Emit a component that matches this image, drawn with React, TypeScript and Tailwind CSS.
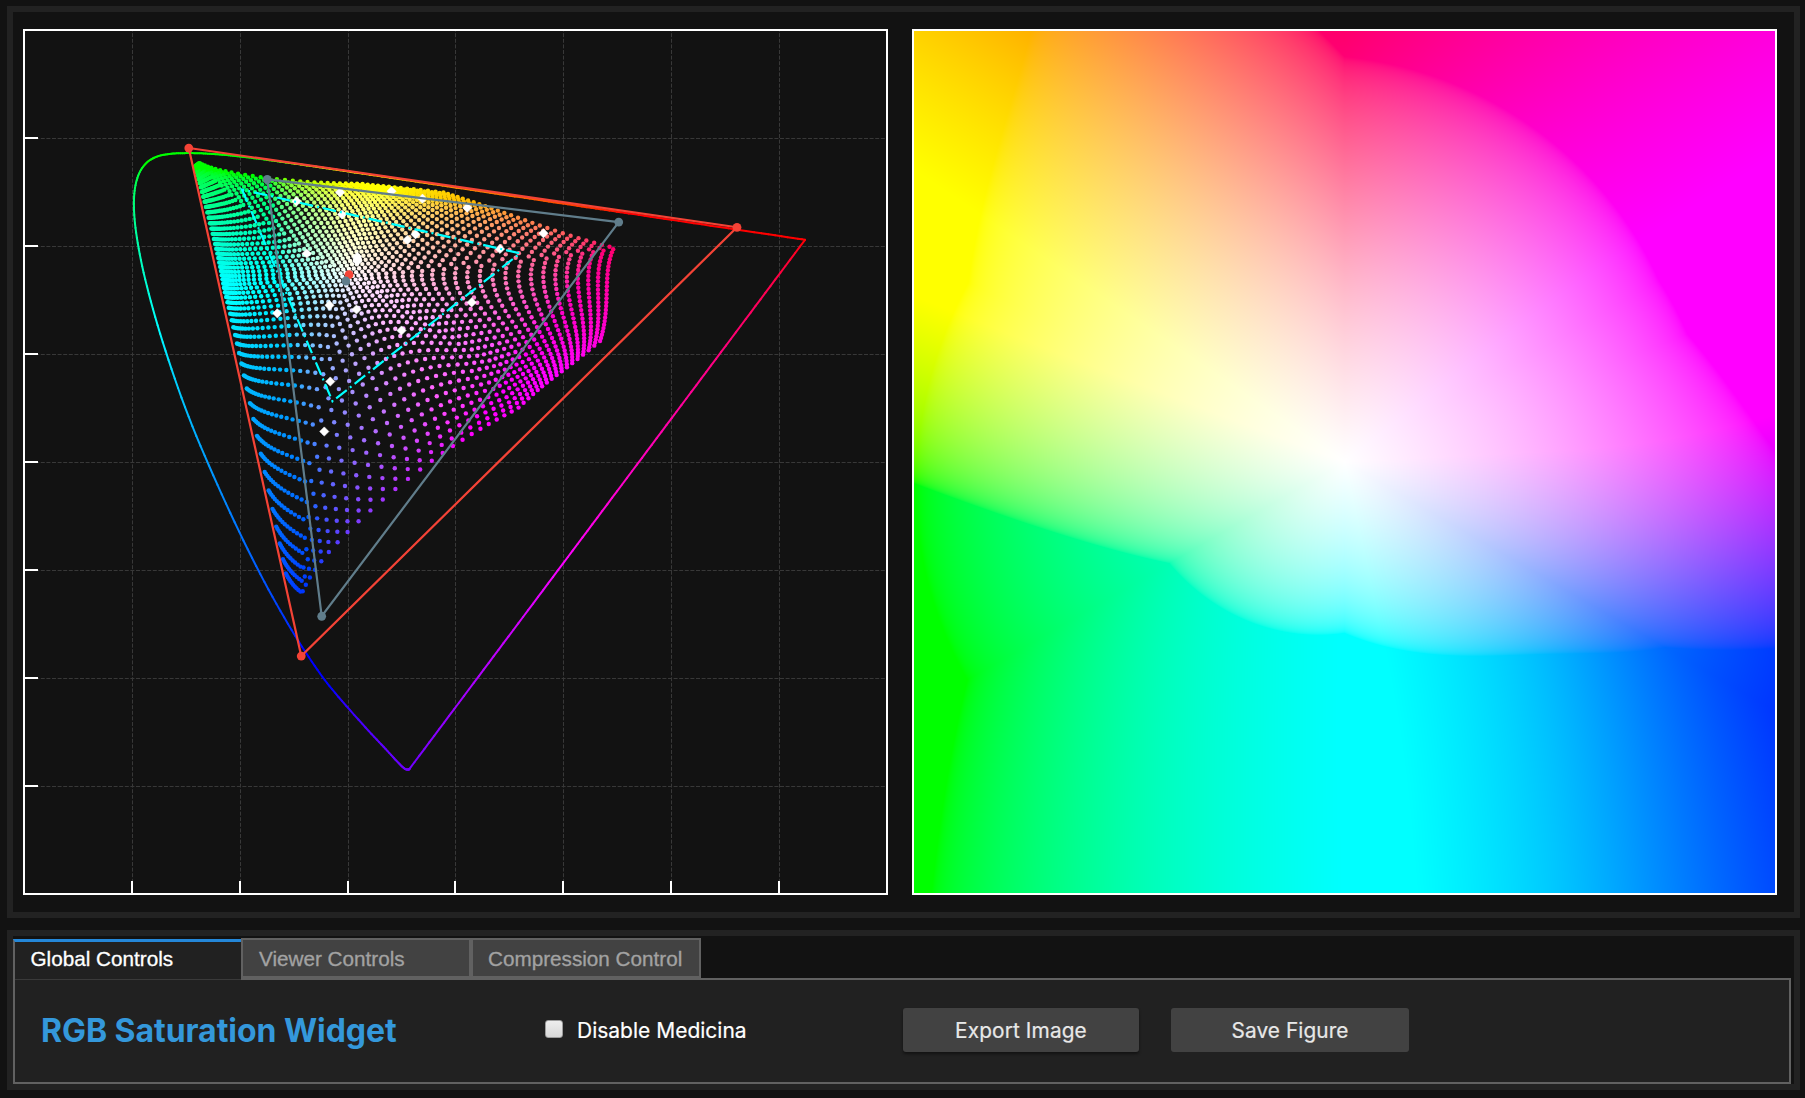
import { useLayoutEffect, useRef } from 'react';

type Vec3 = [number, number, number];
type Point = [number, number];

/* ---------- colour science ---------- */

const WHEEL_SAMPLES = 1024;
const SCATTER_STEP = 20;
const THRESHOLD = 0.5;

function compress(distance: number): number {
  if (distance <= THRESHOLD) return distance;
  const b = 1 - THRESHOLD;
  return THRESHOLD + b * Math.tanh((distance - THRESHOLD) / b);
}

/** HSV wheel with red at the top; x and y are in [-1, 1], y pointing up. */
function wheel(x: number, y: number): Vec3 {
  const s = Math.hypot(x, y);
  let h = (Math.atan2(y, x) * 3) / Math.PI - 1.5;
  h = ((h % 6) + 6) % 6;
  const i = Math.floor(h);
  const f = h - i;
  const j = 1 - s;
  const k = 1 - s * f;
  const l = 1 - s * (1 - f);
  if (i === 0) return [1, l, j];
  if (i === 1) return [k, 1, j];
  if (i === 2) return [j, 1, l];
  if (i === 3) return [j, k, 1];
  if (i === 4) return [l, j, 1];
  return [1, j, k];
}

/** ACES2065-1 wheel colour moved to ACEScg and compressed. */
function compressedWheel(x: number, y: number): Vec3 {
  const [r, g, b] = wheel(x, y);
  const R = 1.4514393 * r - 0.2365107 * g - 0.2149286 * b;
  const G = -0.0765538 * r + 1.1762297 * g - 0.0996759 * b;
  const B = 0.0083161 * r - 0.0060324 * g + 0.9977163 * b;
  const L = Math.max(R, G, B);
  return [
    L * (1 - compress((L - R) / L)),
    L * (1 - compress((L - G) / L)),
    L * (1 - compress((L - B) / L)),
  ];
}

function encode(v: number): number {
  if (v <= 0) return 0;
  if (v >= 1) return 255;
  return 255 * (v <= 0.0031308 ? 12.92 * v : 1.055 * Math.pow(v, 1 / 2.4) - 0.055);
}

function toDisplay([r, g, b]: Vec3): Vec3 {
  return [
    encode(1.70505 * r - 0.62179 * g - 0.08326 * b),
    encode(-0.13026 * r + 1.1408 * g - 0.01055 * b),
    encode(-0.024 * r - 0.12897 * g + 1.15297 * b),
  ];
}

const css = (c: Vec3) => `rgb(${Math.round(c[0])},${Math.round(c[1])},${Math.round(c[2])})`;

function toUV([r, g, b]: Vec3): Point {
  const X = 0.66245418 * r + 0.13400421 * g + 0.15618769 * b;
  const Y = 0.27222872 * r + 0.67408177 * g + 0.05368952 * b;
  const Z = -0.00557465 * r + 0.00406073 * g + 1.0103391 * b;
  const d = X + 15 * Y + 3 * Z;
  return [(4 * X) / d, (9 * Y) / d];
}

function xyToUV([x, y]: Point): Point {
  const d = -2 * x + 12 * y + 3;
  return [(4 * x) / d, (9 * y) / d];
}

const toPlot = ([u, v]: Point): Point => [132.4 + 1079 * u, 786.8 - 1080 * v];

/* ---------- plot data ---------- */

const scatter = (() => {
  const dots: { x: number; y: number; fill: string }[] = [];
  for (let row = 0; row < WHEEL_SAMPLES; row += SCATTER_STEP) {
    for (let col = 0; col < WHEEL_SAMPLES; col += SCATTER_STEP) {
      const x = -1 + (2 * col) / (WHEEL_SAMPLES - 1);
      const y = 1 - (2 * row) / (WHEEL_SAMPLES - 1);
      const rgb = compressedWheel(x, y);
      const [px, py] = toPlot(toUV(rgb));
      dots.push({ x: px, y: py, fill: css(toDisplay(rgb)) });
    }
  }
  return dots;
})();

const LOCUS_XY: Point[] = [
  [0.1741, 0.005], [0.1733, 0.0048], [0.1714, 0.0051], [0.1689, 0.0069], [0.1644, 0.0109],
  [0.1566, 0.0177], [0.144, 0.0297], [0.1355, 0.0399], [0.1241, 0.0578], [0.1096, 0.0868],
  [0.0913, 0.1327], [0.0687, 0.2007], [0.0454, 0.295], [0.0235, 0.4127], [0.0082, 0.5384],
  [0.0039, 0.6548], [0.0139, 0.7502], [0.0389, 0.812], [0.0743, 0.8338], [0.1142, 0.8262],
  [0.1547, 0.8059], [0.1929, 0.7816], [0.2296, 0.7543], [0.2658, 0.7243], [0.3016, 0.6923],
  [0.3373, 0.6589], [0.3731, 0.6245], [0.4087, 0.5896], [0.4441, 0.5547], [0.4788, 0.5202],
  [0.5125, 0.4866], [0.5448, 0.4544], [0.5752, 0.4242], [0.6029, 0.3965], [0.627, 0.3725],
  [0.6482, 0.3514], [0.6658, 0.334], [0.6915, 0.3083], [0.719, 0.2809], [0.7347, 0.2653],
];

function uvColour([u, v]: Point): string {
  const X = (9 * u) / (4 * v);
  const Z = (12 - 3 * u - 20 * v) / (4 * v);
  const r = 3.2406 * X - 1.5372 - 0.4986 * Z;
  const g = -0.9689 * X + 1.8758 + 0.0415 * Z;
  const b = 0.0557 * X - 0.204 + 1.057 * Z;
  const m = Math.max(r, g, b);
  return css([encode(r / m), encode(g / m), encode(b / m)]);
}

const locus = (() => {
  const uv = LOCUS_XY.map(xyToUV);
  const pts: Point[] = [];
  const at = (i: number) => uv[Math.max(0, Math.min(uv.length - 1, i))];
  for (let i = 0; i < uv.length - 1; i++) {
    const [p0, p1, p2, p3] = [at(i - 1), at(i), at(i + 1), at(i + 2)];
    for (let s = 0; s < 8; s++) {
      const t = s / 8;
      const mix = (k: 0 | 1) =>
        0.5 *
        (2 * p1[k] +
          (p2[k] - p0[k]) * t +
          (2 * p0[k] - 5 * p1[k] + 4 * p2[k] - p3[k]) * t * t +
          (3 * p1[k] - p0[k] - 3 * p2[k] + p3[k]) * t * t * t);
      pts.push([mix(0), mix(1)]);
    }
  }
  const end = uv[uv.length - 1];
  for (let s = 0; s <= 80; s++) {
    const t = s / 80;
    pts.push([end[0] + (uv[0][0] - end[0]) * t, end[1] + (uv[0][1] - end[1]) * t]);
  }
  return pts.slice(1).map((p, i) => ({ a: toPlot(pts[i]), b: toPlot(p), stroke: uvColour(p) }));
})();

const AP1 = ([[0.713, 0.293], [0.165, 0.83], [0.128, 0.044]] as Point[]).map((p) => toPlot(xyToUV(p)));
const AP1_WHITE = toPlot(xyToUV([0.32168, 0.33767]));
const SRGB = ([[0.64, 0.33], [0.3, 0.6], [0.15, 0.06]] as Point[]).map((p) => toPlot(xyToUV(p)));
const SRGB_WHITE = toPlot(xyToUV([0.3127, 0.329]));

const PATCHES: Point[] = [
  [296.5, 201.3], [340, 192.3], [391.5, 191.3], [422.5, 198.7], [342, 214.5], [415.5, 234.3],
  [407.3, 240], [306.7, 253.5], [357.3, 256.8], [357.3, 259], [357.3, 261.2], [329.5, 305.3],
  [356.5, 309.5], [277.3, 313.3], [401.5, 330.5], [330.3, 381.5], [467.3, 207.7], [543.5, 233.3],
  [500, 249], [471.7, 302.4], [324.3, 431.5],
];

const X_TICKS = [132, 240, 348, 455, 563, 671, 779];
const Y_TICKS = [138, 246, 354, 462, 570, 678, 786];

const poly = (pts: Point[]) => pts.map((p) => p.join(',')).join(' ');

/* ---------- views ---------- */

function ChromaticityDiagram() {
  return (
    <svg viewBox="23 29 865 866" className="block h-[866px] w-[865px] shrink-0">
      <g stroke="#383838" strokeWidth="1" strokeDasharray="4 1.6">
        {X_TICKS.map((x) => (
          <line key={x} x1={x + 0.5} x2={x + 0.5} y1="894" y2="30" />
        ))}
        {Y_TICKS.map((y) => (
          <line key={y} x1="24" x2="887" y1={y + 0.5} y2={y + 0.5} />
        ))}
      </g>
      <g>
        {scatter.map((d, i) => (
          <circle key={i} cx={d.x} cy={d.y} r="2.2" fill={d.fill} />
        ))}
      </g>
      <g fill="#ffffff" stroke="#ffffff" strokeWidth="0.6" strokeLinejoin="round">
        {PATCHES.map(([x, y], i) => (
          <path key={i} d={`M${x} ${y - 4.6}L${x + 4.6} ${y}L${x} ${y + 4.6}L${x - 4.6} ${y}Z`} />
        ))}
      </g>
      <g strokeWidth="2" strokeLinecap="round">
        {locus.map((s, i) => (
          <line key={i} x1={s.a[0]} y1={s.a[1]} x2={s.b[0]} y2={s.b[1]} stroke={s.stroke} />
        ))}
      </g>
      <polygon
        points="242,189.5 332.5,401.3 520,253.3"
        fill="none"
        stroke="#00ffff"
        strokeWidth="2.2"
        strokeDasharray="13.5 4 2 4"
      />
      <polygon points={poly(AP1)} fill="none" stroke="#f44336" strokeWidth="2.2" />
      {[...AP1, AP1_WHITE].map(([x, y], i) => (
        <circle key={i} cx={x} cy={y} r="4.4" fill="#f44336" />
      ))}
      <polygon points={poly(SRGB)} fill="none" stroke="#607d8b" strokeWidth="2.2" />
      {[...SRGB, SRGB_WHITE].map(([x, y], i) => (
        <circle key={i} cx={x} cy={y} r="4.4" fill="#607d8b" />
      ))}
      <g stroke="#ffffff" strokeWidth="2">
        {X_TICKS.map((x) => (
          <line key={x} x1={x} x2={x} y1="881" y2="894" />
        ))}
        {Y_TICKS.map((y) => (
          <line key={y} x1="24" x2="38" y1={y} y2={y} />
        ))}
        <rect x="24" y="30" width="863" height="864" fill="none" />
      </g>
    </svg>
  );
}

function WheelImage() {
  const ref = useRef<HTMLCanvasElement>(null);
  useLayoutEffect(() => {
    const canvas = ref.current;
    const ctx = canvas?.getContext('2d');
    if (!canvas || !ctx) return;
    const { width, height } = canvas;
    const image = ctx.createImageData(width, height);
    for (let row = 0; row < height; row++) {
      for (let col = 0; col < width; col++) {
        const x = -1 + (2 * (col + 0.5)) / width;
        const y = 1 - (2 * (row + 0.5)) / height;
        const [r, g, b] = toDisplay(compressedWheel(x, y));
        const o = (row * width + col) * 4;
        image.data[o] = r;
        image.data[o + 1] = g;
        image.data[o + 2] = b;
        image.data[o + 3] = 255;
      }
    }
    ctx.putImageData(image, 0, 0);
  }, []);
  return (
    <div className="h-[866px] w-[865px] shrink-0 border-2 border-white">
      <canvas ref={ref} width={861} height={862} className="block h-[862px] w-[861px]" />
    </div>
  );
}

function Controls() {
  return (
    <section className="flex h-[160px] w-[1793px] flex-col border-[6px] border-[#222222] bg-[#121212] pt-[2px] font-['Liberation_Sans',Arial,sans-serif]">
      <div className="flex h-[40px] text-[20.7px] leading-[38px] [-webkit-text-stroke:0.3px]">
        <div className="z-10 mt-px h-[41px] w-[228px] border-t-[3px] border-l-2 border-t-[#2487d8] border-l-[#616161] bg-[#212121] pl-[15.5px] leading-[34px] text-white shadow-[inset_0_-1px_0_#3a3a3a]">
          Global Controls
        </div>
        <div className="w-[230px] border-2 border-[#616161] bg-[#424242] pl-[16px] text-[#a2a2a2]">
          Viewer Controls
        </div>
        <div className="w-[230px] border-2 border-[#616161] bg-[#424242] pl-[15px] text-[#a2a2a2]">
          Compression Control
        </div>
      </div>
      <div className="flex h-[106px] w-[1778px] items-center border-2 border-[#616161] bg-[#212121] pb-[2px] font-['Inter',sans-serif]">
        <h1 className="ml-[26px] w-[504px] pt-[2px] text-[32px] font-bold tracking-[-0.05px] text-[#3498db]">
          RGB Saturation Widget
        </h1>
        <label className="flex w-[358px] items-center pt-[2px] text-[21px] text-white [-webkit-text-stroke:0.2px]">
          <span className="-mt-[5px] mr-[14px] size-[18px] rounded-[3px] border border-[#9c9c9c] bg-linear-to-b from-[#eeeeee] to-[#d8d8d8]" />
          Disable Medicina
        </label>
        <button className="h-[44px] w-[236px] rounded-[3px] bg-[#424242] pt-[2px] text-[20.8px] tracking-[0.13px] text-[#e8e8e8] shadow-[0_2px_3px_rgba(0,0,0,0.45)] [-webkit-text-stroke:0.2px]">
          Export Image
        </button>
        <button className="ml-[32px] h-[44px] w-[238px] rounded-[3px] bg-[#424242] pt-[2px] text-[20.8px] tracking-[0.08px] text-[#e8e8e8] [-webkit-text-stroke:0.2px]">
          Save Figure
        </button>
      </div>
    </section>
  );
}

export default function App() {
  return (
    <main className="flex h-[1098px] w-[1805px] flex-col gap-3 overflow-hidden bg-[#121212] pt-1.5 pl-[7px]">
      <section className="flex h-[912px] w-[1793px] gap-6 border-[6px] border-[#222222] pt-[17px] pl-[10px]">
        <ChromaticityDiagram />
        <WheelImage />
      </section>
      <Controls />
    </main>
  );
}
